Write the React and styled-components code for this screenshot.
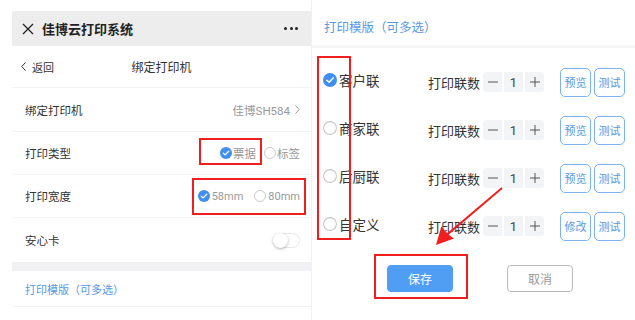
import React from 'react';
import styled, { createGlobalStyle } from 'styled-components';

const GlobalStyle = createGlobalStyle`
  html, body {
    margin: 0;
    padding: 0;
    background: #fff;
  }
  * {
    box-sizing: border-box;
  }
`

const Page = styled.div`
  position: relative;
  display: flex;
  width: 635px;
  height: 320px;
  overflow: hidden;
  background: #fff;
  color: #333;
  font-family: Roboto, 'Noto Sans CJK SC', sans-serif;
`

const LeftPanel = styled.div`
  display: flex;
  flex-direction: column;
  width: 299px;
  margin-left: 12px;
  padding-top: 11px;
`

const WxHeader = styled.div`
  display: flex;
  align-items: center;
  height: 35px;
  padding: 0 13px 0 10px;
  background: #ededed;
`

const WxTitle = styled.div`
  margin-left: 8px;
  font-size: 13px;
  font-weight: 700;
  color: #222;
`

const More = styled.div`
  margin-left: auto;
  display: flex;
  gap: 2.5px;

  & span {
    width: 3px;
    height: 3px;
    border-radius: 50%;
    background: #222;
  }
`

const Nav = styled.div`
  display: grid;
  grid-template-columns: 1fr auto 1fr;
  align-items: center;
  height: 42px;
  border-bottom: 1px solid #f2f2f2;
  font-size: 11px;
`

const Back = styled.div`
  display: flex;
  align-items: center;
  gap: 6px;
  padding-left: 9px;
  color: #333;
`

const NavTitle = styled.div`
  font-size: 12px;
  color: #333;
`

const Cell = styled.div`
  display: flex;
  align-items: center;
  justify-content: space-between;
  height: ${p => p.$h || 43}px;
  padding: 0 11px 0 13px;
  border-bottom: ${p => (p.$last ? 'none' : '1px solid #f2f2f2')};
  font-size: 11.5px;
`

const CellValue = styled.div`
  display: flex;
  align-items: center;
  gap: 5px;
  color: #999;
  font-size: 11.5px;
`

const Options = styled.div`
  display: flex;
  align-items: center;
  gap: ${p => p.$gap || 8}px;
`

const Option = styled.div`
  display: flex;
  align-items: center;
  gap: ${p => p.$inner || 1}px;
  color: #999;
  font-size: ${p => p.$size || 11.5}px;
`

const Band = styled.div`
  height: 9px;
  background: #f1f1f4;
`

const BlueCell = styled(Cell)`
  color: #5a98e3;
  font-size: 11px;
`

const Toggle = styled.div`
  position: relative;
  width: 27px;
  height: 15px;
  border: 1px solid #e6e6e6;
  border-radius: 8px;
  background: #fff;

  &::after {
    content: '';
    position: absolute;
    left: -1px;
    top: -1px;
    width: 15px;
    height: 15px;
    border-radius: 50%;
    background: #fff;
    box-shadow: 0 1px 3px rgba(0, 0, 0, 0.3);
  }
`

const RightPanel = styled.div`
  display: flex;
  flex-direction: column;
  flex: 1;
  border-left: 1px solid #f1f1f1;
`

const TitleBar = styled.div`
  display: flex;
  align-items: center;
  height: 48px;
  padding: 8px 0 0 12px;
  border-bottom: 3px solid #f5f5f5;
  color: #5a98e3;
  font-size: 12.5px;
`

const List = styled.div`
  display: flex;
  flex-direction: column;
  padding: 8px 0 0 11px;
`

const TplRow = styled.div`
  display: flex;
  align-items: center;
  height: 48px;
`

const TplName = styled.div`
  width: 89px;
  margin-left: 2px;
  font-size: 13.5px;
  color: #333;
`

const Controls = styled.div`
  display: flex;
  align-items: center;
  margin-top: 4px;
`

const CountLabel = styled.div`
  font-size: 13px;
  color: #333;
`

const Stepper = styled.div`
  display: flex;
  gap: 2px;
  margin-left: 3px;
`

const StepCell = styled.div`
  display: flex;
  align-items: center;
  justify-content: center;
  width: 19px;
  height: 20px;
  background: #f3f4f6;
  border-radius: ${p => p.$r || '0'};
  font-size: 13px;
  color: #444;
`

const SmallButtons = styled.div`
  display: flex;
  gap: 3px;
  margin-left: 16px;
`

const SmallButton = styled.div`
  display: flex;
  align-items: center;
  justify-content: center;
  width: 31px;
  height: 29px;
  border: 1px solid #7db2ee;
  border-radius: 5px;
  color: #5a98e3;
  font-size: 11px;
`

const Footer = styled.div`
  display: flex;
  gap: 54px;
  padding: 17px 0 0 75px;
`

const ActionButton = styled.div`
  display: flex;
  align-items: center;
  justify-content: center;
  width: 66px;
  height: 27px;
  border-radius: 4px;
  font-size: 12px;
  background: ${p => (p.$primary ? '#4f9ef4' : '#fff')};
  color: ${p => (p.$primary ? '#fff' : '#999')};
  border: 1px solid ${p => (p.$primary ? '#4f9ef4' : '#bbb')};
`

const Mark = styled.div`
  position: absolute;
  left: ${p => p.$x}px;
  top: ${p => p.$y}px;
  width: ${p => p.$w}px;
  height: ${p => p.$h}px;
  border: 2px solid #f21d1d;
  pointer-events: none;
`

const ArrowLayer = styled.svg`
  position: absolute;
  left: 0;
  top: 0;
  pointer-events: none;
`

const CheckCircle = ({ size = 12, on }) => (
  <svg width={size} height={size} viewBox="0 0 14 14">
    {on ? (
      <>
        <circle cx="7" cy="7" r="7" fill="#3f8ef0" />
        <path d="M3.8 7.2 L6 9.2 L10.2 4.9" fill="none" stroke="#fff" strokeWidth="1.5" strokeLinecap="round" strokeLinejoin="round" />
      </>
    ) : (
      <circle cx="7" cy="7" r="6.4" fill="#fff" stroke="#c8c8c8" strokeWidth="1.1" />
    )}
  </svg>
)

const Minus = () => (
  <svg width="10" height="10" viewBox="0 0 10 10">
    <path d="M0 5 H10" stroke="#555" strokeWidth="1" />
  </svg>
)

const Plus = () => (
  <svg width="10" height="10" viewBox="0 0 10 10">
    <path d="M0 5 H10 M5 0 V10" stroke="#555" strokeWidth="1" />
  </svg>
)

const templates = [
  { name: '客户联', on: true, edit: '预览' },
  { name: '商家联', on: false, edit: '预览' },
  { name: '后厨联', on: false, edit: '预览' },
  { name: '自定义', on: false, edit: '修改' },
]

export default function App() {
  return (
    <>
      <GlobalStyle />
      <Page>
        <LeftPanel>
          <WxHeader>
            <svg width="12" height="12" viewBox="0 0 12 12">
              <path d="M1 1 L11 11 M11 1 L1 11" stroke="#222" strokeWidth="1.3" />
            </svg>
            <WxTitle>佳博云打印系统</WxTitle>
            <More><span /><span /><span /></More>
          </WxHeader>
          <Nav>
            <Back>
              <svg width="5" height="9" viewBox="0 0 5 9">
                <path d="M4.5 0.5 L0.8 4.5 L4.5 8.5" fill="none" stroke="#333" strokeWidth="1" />
              </svg>
              返回
            </Back>
            <NavTitle>绑定打印机</NavTitle>
            <div />
          </Nav>
          <Cell $h={44}>
            <span>绑定打印机</span>
            <CellValue>
              佳博SH584
              <svg width="5" height="9" viewBox="0 0 5 9">
                <path d="M0.5 0.5 L4.2 4.5 L0.5 8.5" fill="none" stroke="#999" strokeWidth="1" />
              </svg>
            </CellValue>
          </Cell>
          <Cell>
            <span>打印类型</span>
            <Options $gap={8}>
              <Option><CheckCircle on />票据</Option>
              <Option><CheckCircle />标签</Option>
            </Options>
          </Cell>
          <Cell>
            <span>打印宽度</span>
            <Options $gap={11}>
              <Option $size={11} $inner={2}><CheckCircle on />58mm</Option>
              <Option $size={11} $inner={2}><CheckCircle />80mm</Option>
            </Options>
          </Cell>
          <Cell $h={44} $last>
            <span>安心卡</span>
            <Toggle />
          </Cell>
          <Band />
          <BlueCell $h={36}>
            <span>打印模版（可多选）</span>
          </BlueCell>
        </LeftPanel>

        <RightPanel>
          <TitleBar>打印模版（可多选）</TitleBar>
          <List>
            {templates.map(t => (
              <TplRow key={t.name}>
                <CheckCircle size={14} on={t.on} />
                <TplName>{t.name}</TplName>
                <Controls>
                  <CountLabel>打印联数</CountLabel>
                  <Stepper>
                    <StepCell $r="3px 0 0 3px"><Minus /></StepCell>
                    <StepCell>1</StepCell>
                    <StepCell $r="0 3px 3px 0"><Plus /></StepCell>
                  </Stepper>
                  <SmallButtons>
                    <SmallButton>{t.edit}</SmallButton>
                    <SmallButton>测试</SmallButton>
                  </SmallButtons>
                </Controls>
              </TplRow>
            ))}
          </List>
          <Footer>
            <ActionButton $primary>保存</ActionButton>
            <ActionButton>取消</ActionButton>
          </Footer>
        </RightPanel>

        <Mark $x={199} $y={138} $w={63} $h={27} />
        <Mark $x={192} $y={178} $w={114} $h={37} />
        <Mark $x={317} $y={56} $w={34} $h={184} />
        <Mark $x={374} $y={254} $w={94} $h={45} />

        <ArrowLayer width="635" height="320" viewBox="0 0 635 320">
          <polygon
            points="502.6,188.7 501.4,187.3 447.1,233.2 441.3,226.5 436,245 454,238.4 448.6,234.8"
            fill="#f21d1d"
          />
        </ArrowLayer>
      </Page>
    </>
  );
}
